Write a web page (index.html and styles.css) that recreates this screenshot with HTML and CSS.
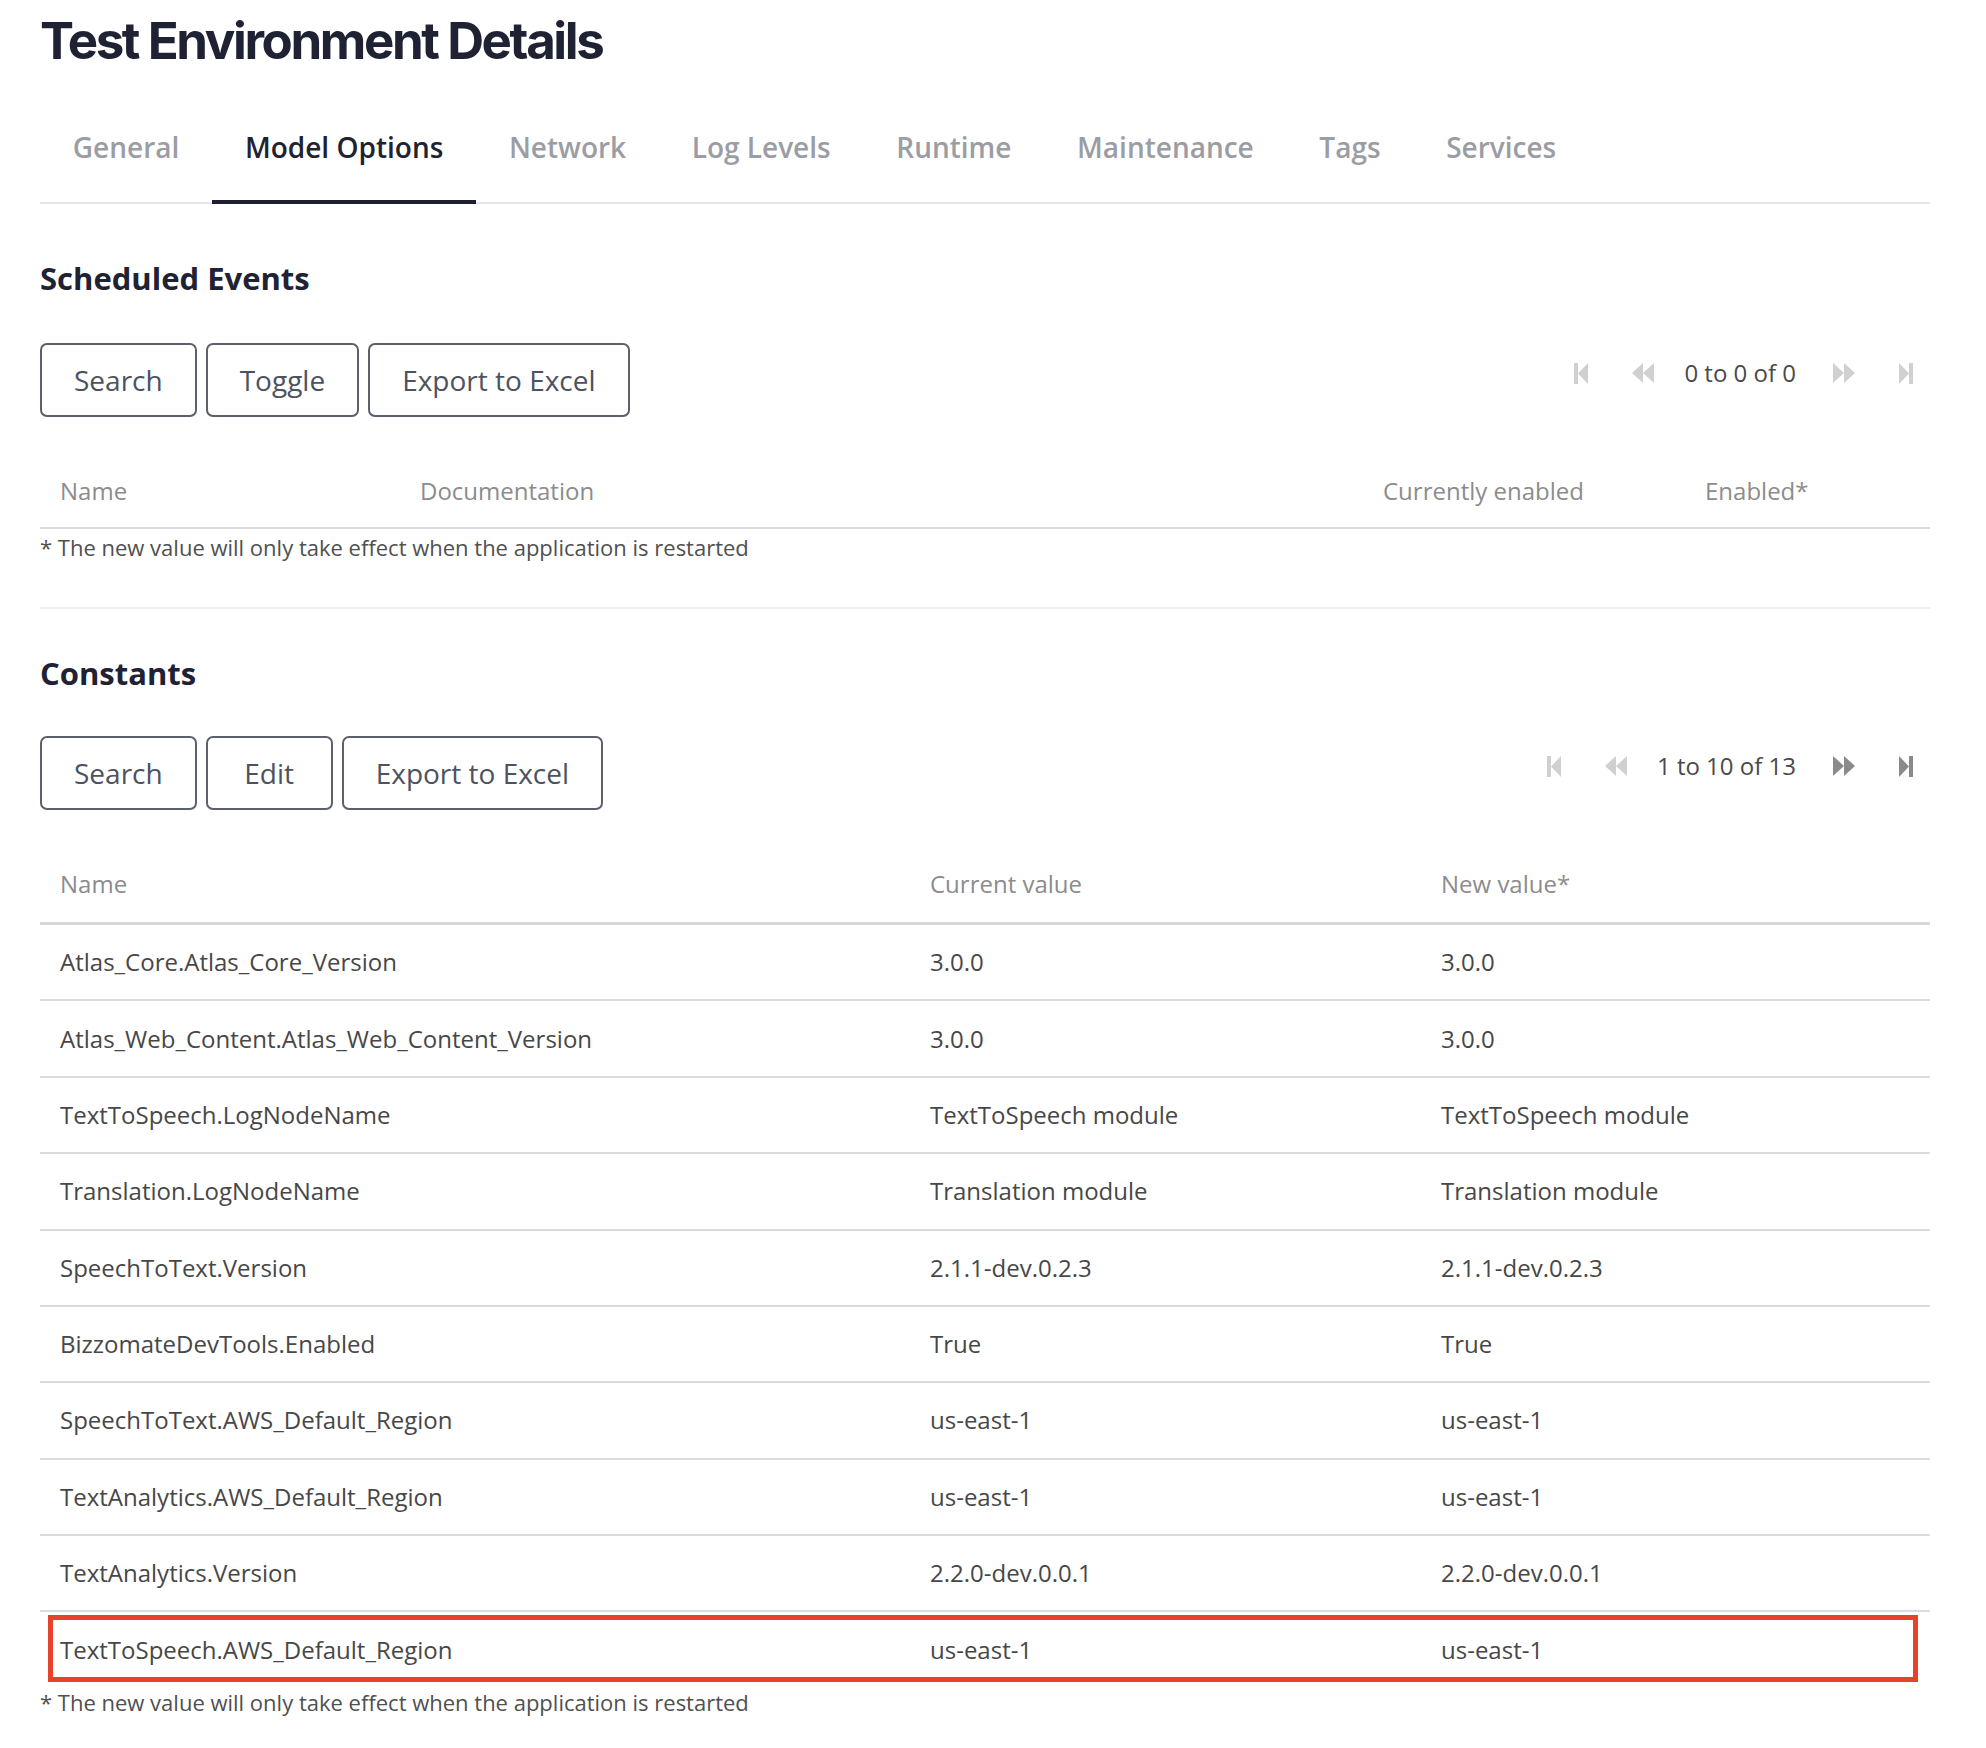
FILE: index.html
```html
<!DOCTYPE html>
<html lang="en">
<head>
<meta charset="utf-8">
<title>Test Environment Details</title>
<link rel="stylesheet" href="styles.css">
</head>
<body>
<div class="page">
  <h1 class="title">Test Environment Details</h1>
  <nav class="tabs">
    <a class="tab">General</a>
    <a class="tab tab-active">Model Options</a>
    <a class="tab">Network</a>
    <a class="tab">Log Levels</a>
    <a class="tab">Runtime</a>
    <a class="tab">Maintenance</a>
    <a class="tab">Tags</a>
    <a class="tab">Services</a>
  </nav>

  <section class="section section-events">
    <h2 class="section-title">Scheduled Events</h2>
    <div class="toolbar">
      <div class="btn-group">
        <button class="btn">Search</button>
        <button class="btn">Toggle</button>
        <button class="btn">Export to Excel</button>
      </div>
      <div class="pager">
        <span class="pg-btn pg-disabled"><svg width="14" height="21" viewBox="0 0 14 21"><rect x="0" y="0" width="4" height="21"/><polygon points="14,0 14,21 4,10.5"/></svg></span>
        <span class="pg-btn pg-disabled"><svg width="22" height="20" viewBox="0 0 22 20"><polygon points="11,0 11,20 0,10"/><polygon points="22,0 22,20 11,10"/></svg></span>
        <span class="pg-text">0 to 0 of 0</span>
        <span class="pg-btn pg-disabled"><svg width="22" height="20" viewBox="0 0 22 20"><polygon points="0,0 0,20 11,10"/><polygon points="11,0 11,20 22,10"/></svg></span>
        <span class="pg-btn pg-disabled"><svg width="14" height="21" viewBox="0 0 14 21"><polygon points="0,0 0,21 10,10.5"/><rect x="10" y="0" width="4" height="21"/></svg></span>
      </div>
    </div>
    <div class="grid grid-events">
      <div class="grid-head">
        <div class="cell">Name</div>
        <div class="cell">Documentation</div>
        <div class="cell">Currently enabled</div>
        <div class="cell">Enabled*</div>
      </div>
    </div>
    <p class="note">* The new value will only take effect when the application is restarted</p>
  </section>

  <section class="section section-constants">
    <h2 class="section-title">Constants</h2>
    <div class="toolbar">
      <div class="btn-group">
        <button class="btn">Search</button>
        <button class="btn">Edit</button>
        <button class="btn">Export to Excel</button>
      </div>
      <div class="pager">
        <span class="pg-btn pg-disabled"><svg width="14" height="21" viewBox="0 0 14 21"><rect x="0" y="0" width="4" height="21"/><polygon points="14,0 14,21 4,10.5"/></svg></span>
        <span class="pg-btn pg-disabled"><svg width="22" height="20" viewBox="0 0 22 20"><polygon points="11,0 11,20 0,10"/><polygon points="22,0 22,20 11,10"/></svg></span>
        <span class="pg-text">1 to 10 of 13</span>
        <span class="pg-btn pg-enabled"><svg width="22" height="20" viewBox="0 0 22 20"><polygon points="0,0 0,20 11,10"/><polygon points="11,0 11,20 22,10"/></svg></span>
        <span class="pg-btn pg-enabled"><svg width="14" height="21" viewBox="0 0 14 21"><polygon points="0,0 0,21 10,10.5"/><rect x="10" y="0" width="4" height="21"/></svg></span>
      </div>
    </div>
    <div class="grid grid-constants">
      <div class="grid-head">
        <div class="cell">Name</div>
        <div class="cell">Current value</div>
        <div class="cell">New value*</div>
      </div>
      <div class="grid-row">
        <div class="cell">Atlas_Core.Atlas_Core_Version</div>
        <div class="cell">3.0.0</div>
        <div class="cell">3.0.0</div>
      </div>
      <div class="grid-row">
        <div class="cell">Atlas_Web_Content.Atlas_Web_Content_Version</div>
        <div class="cell">3.0.0</div>
        <div class="cell">3.0.0</div>
      </div>
      <div class="grid-row">
        <div class="cell">TextToSpeech.LogNodeName</div>
        <div class="cell">TextToSpeech module</div>
        <div class="cell">TextToSpeech module</div>
      </div>
      <div class="grid-row">
        <div class="cell">Translation.LogNodeName</div>
        <div class="cell">Translation module</div>
        <div class="cell">Translation module</div>
      </div>
      <div class="grid-row">
        <div class="cell">SpeechToText.Version</div>
        <div class="cell">2.1.1-dev.0.2.3</div>
        <div class="cell">2.1.1-dev.0.2.3</div>
      </div>
      <div class="grid-row">
        <div class="cell">BizzomateDevTools.Enabled</div>
        <div class="cell">True</div>
        <div class="cell">True</div>
      </div>
      <div class="grid-row">
        <div class="cell">SpeechToText.AWS_Default_Region</div>
        <div class="cell">us-east-1</div>
        <div class="cell">us-east-1</div>
      </div>
      <div class="grid-row">
        <div class="cell">TextAnalytics.AWS_Default_Region</div>
        <div class="cell">us-east-1</div>
        <div class="cell">us-east-1</div>
      </div>
      <div class="grid-row">
        <div class="cell">TextAnalytics.Version</div>
        <div class="cell">2.2.0-dev.0.0.1</div>
        <div class="cell">2.2.0-dev.0.0.1</div>
      </div>
      <div class="grid-row grid-row-last grid-row-marked">
        <div class="cell">TextToSpeech.AWS_Default_Region</div>
        <div class="cell">us-east-1</div>
        <div class="cell">us-east-1</div>
      </div>
    </div>
    <p class="note">* The new value will only take effect when the application is restarted</p>
  </section>
</div>
</body>
</html>
```

FILE: styles.css
```css
* { box-sizing: border-box; }

body {
  margin: 0;
  background: #ffffff;
  font-family: "Open Sans", "Liberation Sans", sans-serif;
  color: #4a4a4a;
}

.page {
  width: 1930px;
  padding-left: 40px;
}

.title {
  margin: 0;
  padding-top: 9px;
  font-family: Inter, "Open Sans", sans-serif;
  font-weight: 700;
  font-size: 51px;
  line-height: 64px;
  letter-spacing: -2.4px;
  color: #1e2232;
}

.tabs {
  display: flex;
  margin-top: 54px;
  border-bottom: 2px solid #e6e6e8;
}

.tab {
  display: block;
  padding: 0 32.8px 33px;
  font-size: 28px;
  line-height: 40px;
  font-weight: 600;
  color: #9b9da4;
  border-bottom: 4px solid transparent;
  margin-bottom: -2px;
}

.tab-active {
  color: #1e2232;
  border-bottom-color: #1b1f2e;
}

.section-title {
  margin: 0 0 45px;
  font-size: 31px;
  line-height: 40px;
  font-weight: 700;
  color: #1e2232;
}

.section-events {
  padding-top: 54px;
  padding-bottom: 45px;
  border-bottom: 2px solid #eeeeee;
}

.section-events .note {
  margin-top: 3px;
}

.section-constants {
  padding-top: 44px;
}

.section-constants .section-title {
  margin-bottom: 43px;
}

.toolbar {
  display: flex;
  justify-content: space-between;
  align-items: flex-start;
}

.btn-group {
  display: flex;
  gap: 9px;
}

.btn {
  min-width: 127px;
  font-family: "Open Sans", "Liberation Sans", sans-serif;
  font-size: 28px;
  line-height: 40px;
  padding: 15px 32px;
  color: #4d5261;
  background: #ffffff;
  border: 2px solid #5b606b;
  border-radius: 7px;
}

.pager {
  display: flex;
  align-items: center;
  height: 40px;
  margin-top: 10px;
  gap: 14px;
}

.pg-btn {
  width: 48px;
  display: flex;
  justify-content: center;
  align-items: center;
}

.pg-disabled { fill: #d0d0d0; }
.pg-enabled { fill: #8a8a8a; }

.pg-text {
  font-size: 24px;
  line-height: 40px;
  color: #4a4a4a;
  margin: 0 10px 0 3px;
}

.grid {
  margin-top: 40px;
}

.grid-head,
.grid-row {
  display: grid;
}

.grid-events .grid-head {
  grid-template-columns: 360px 963px 322px 1fr;
  border-bottom: 2px solid #dadada;
}

.grid-constants .grid-head,
.grid-constants .grid-row {
  grid-template-columns: 870px 511px 1fr;
}

.grid-head .cell {
  padding: 14px 0 16px 20px;
  font-size: 24px;
  line-height: 40px;
  color: #8c8c8c;
}

.grid-constants .grid-head {
  border-bottom: 3px solid #d8d8d8;
}

.grid-constants .grid-head .cell {
  padding-bottom: 18px;
}

.grid-row {
  position: relative;
  border-bottom: 2px solid #dcdcdc;
}

.grid-row .cell {
  padding: 17.2px 0 17.2px 20px;
  font-size: 24px;
  line-height: 40px;
  color: #474747;
  white-space: nowrap;
}

.grid-row-last {
  border-bottom: none;
}

.grid-row-marked::after {
  content: "";
  position: absolute;
  top: 3px;
  bottom: 5px;
  left: 8px;
  right: 12px;
  border: 5px solid #e5432b;
  pointer-events: none;
}

.note {
  margin: 0;
  font-size: 22px;
  line-height: 30px;
  color: #505050;
}
```
